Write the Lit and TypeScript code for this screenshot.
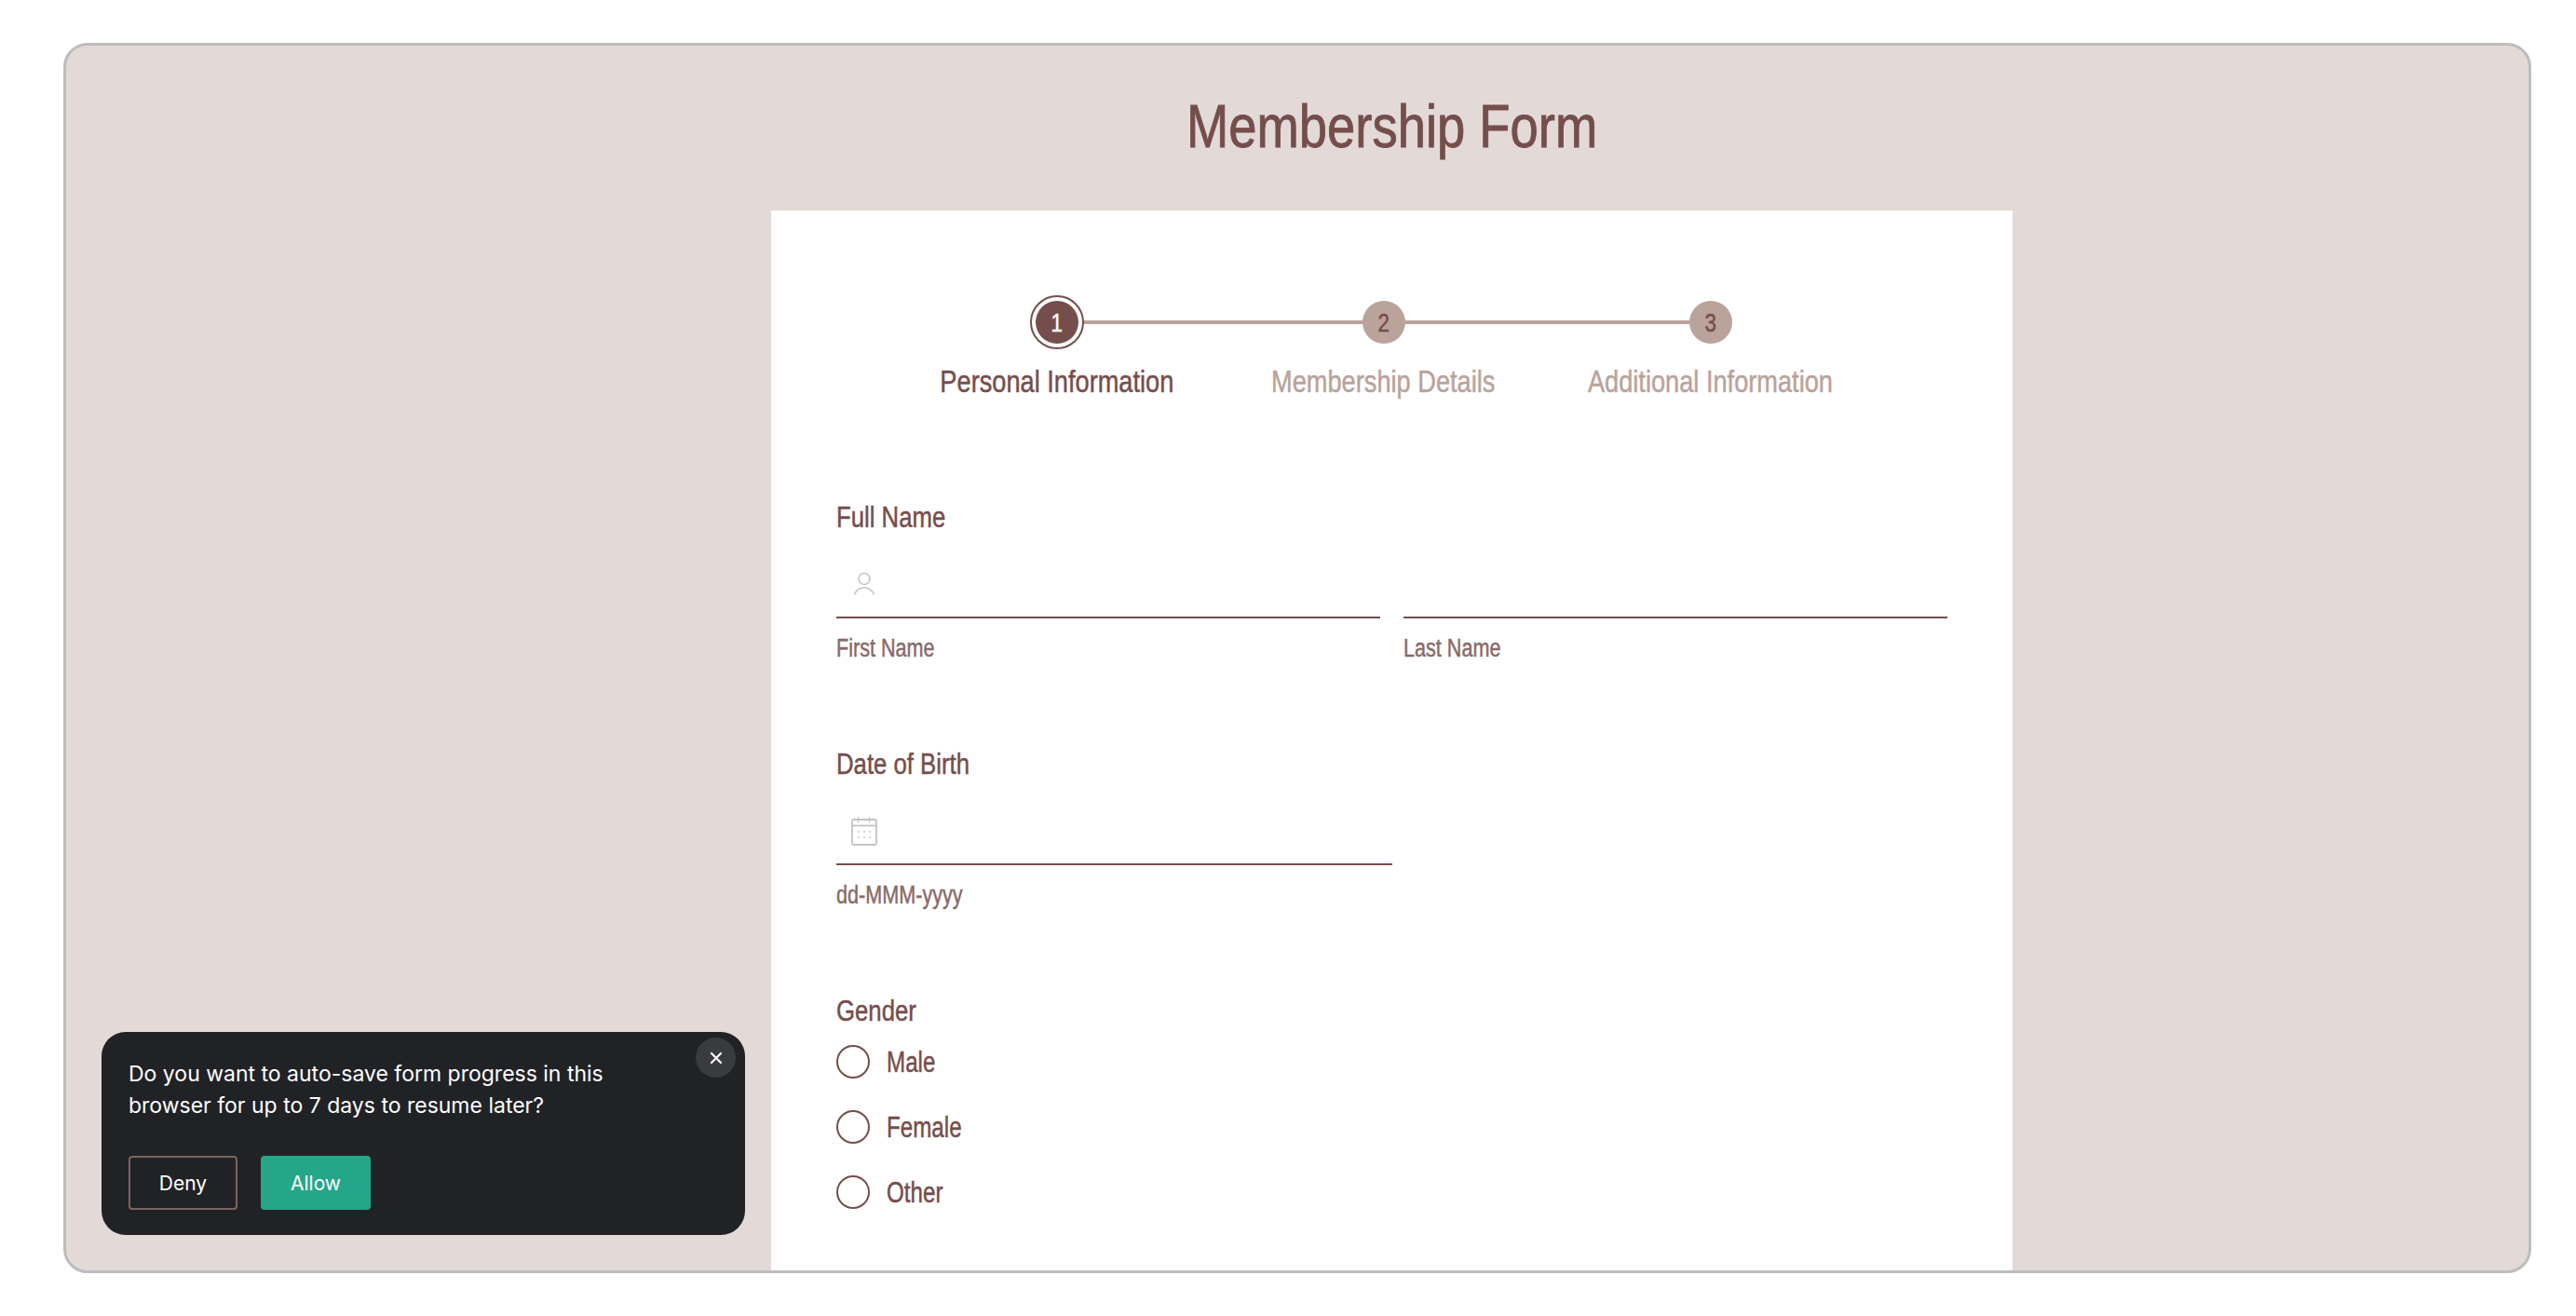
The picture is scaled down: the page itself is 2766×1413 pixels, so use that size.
import { LitElement, html, css } from 'lit';
import { customElement } from 'lit/decorators.js';

const steps = ['Personal Information', 'Membership Details', 'Additional Information'];
const genders = ['Male', 'Female', 'Other'];

const userIcon = html`<svg class="icon" width="30" height="30" viewBox="0 0 30 30" fill="none" stroke="#c6c2c1" stroke-width="1.6">
  <circle cx="15" cy="8.500" r="6" />
  <path d="M4.500 25.500c2-5 5.800-7.500 10.500-7.500s8.500 2.500 10.500 7.500" />
</svg>`;

const calendarIcon = html`<svg class="icon" width="30" height="32" viewBox="0 0 30 32" fill="none" stroke="#c6c2c1" stroke-width="1.8">
  <rect x="2" y="3" width="26" height="27" rx="1.500" />
  <path d="M2 9.500h26" />
  <path d="M8.500 0v6M20.500 0v6" stroke-width="1.200" />
  <path d="M8 16h1.500M14.300 16h1.500M20.500 16h1.500M8 22h1.500M14.300 22h1.500M20.500 22h1.500" stroke-width="1.500" stroke="#b9b4b3" />
</svg>`;

@customElement('app-root')
export class AppRoot extends LitElement {
  static styles = css`
    :host {
      display: block;
      height: 1413px;
      background: #fff;
      font-family: 'Liberation Sans', sans-serif;
      color: #754e4c;
    }
    /* no narrow family installed, so the grotesque gets squeezed */
    .nr {
      display: inline-block;
      transform-origin: left center;
      -webkit-text-stroke: 0.5px currentColor;
      white-space: nowrap;
    }
    .frame {
      position: relative;
      box-sizing: border-box;
      height: 1321px;
      width: 2650px;
      margin-left: 68px;
      top: 46px;
      padding-left: 203px;
      border: 3px solid #bdbdbd;
      border-radius: 26px;
      background: #e3dad8;
      overflow: hidden;
      display: flex;
      flex-direction: column;
      align-items: center;
    }
    h1 {
      margin: 52px 0 55px;
      font-size: 64px;
      line-height: 70px;
      font-weight: 400;
      text-align: center;
    }
    h1 .nr {
      -webkit-text-stroke: 0.9px currentColor;
      transform: scaleX(0.85);
      transform-origin: center;
    }
    .card {
      flex: 1;
      box-sizing: border-box;
      width: 1333px;
      background: #fff;
      padding: 91px 70px 0 70px;
    }
    .stepper {
      display: grid;
      grid-template-columns: repeat(3, 351px);
      justify-content: center;
      margin-bottom: 107px;
      padding-right: 18px;
    }
    .step {
      position: relative;
      display: flex;
      flex-direction: column;
      align-items: center;
      color: #b9a39b;
    }
    .step.active {
      color: #754e4c;
    }
    .step:not(:last-child)::after {
      content: '';
      position: absolute;
      left: 50%;
      width: 100%;
      top: 27px;
      height: 4px;
      background: #b9a39b;
    }
    .ring {
      position: relative;
      z-index: 1;
      box-sizing: border-box;
      width: 58px;
      height: 58px;
      border: 2px solid transparent;
      border-radius: 50%;
      display: flex;
      align-items: center;
      justify-content: center;
      background: #fff;
    }
    .step:not(.active) .ring {
      background: transparent;
    }
    .step.active .ring {
      border-color: #754e4c;
    }
    .num {
      width: 46px;
      height: 46px;
      border-radius: 50%;
      background: #b9a39b;
      color: #754e4c;
      font-size: 28px;
      line-height: 48px;
      text-align: center;
    }
    .num .nr {
      transform: scaleX(0.8);
      transform-origin: center;
    }
    .step.active .num {
      background: #754e4c;
      color: #fff;
    }
    .step-label {
      margin-top: 14px;
      font-size: 34px;
      line-height: 40px;
    }
    .step-label .nr {
      transform: scaleX(0.8);
      transform-origin: center;
    }
    .group {
      margin-bottom: 89px;
    }
    .label {
      padding-top: 2px;
      font-size: 31px;
      line-height: 36px;
    }
    .label .nr {
      transform: scaleX(0.83);
    }
    .row {
      display: flex;
      gap: 25px;
    }
    .col {
      flex: 1;
    }
    .col.date {
      flex: none;
      width: 597px;
    }
    .field {
      box-sizing: border-box;
      height: 90px;
      border-bottom: 2px solid #754e4c;
      display: flex;
      align-items: center;
      padding: 20px 0 0 15px;
    }
    .hint {
      margin-top: 16px;
      font-size: 27px;
      line-height: 32px;
      color: #886b69;
    }
    .hint .nr {
      transform: scaleX(0.8);
    }
    .radios {
      display: flex;
      flex-direction: column;
      gap: 34px;
      margin-top: 18px;
    }
    .radio {
      display: flex;
      align-items: center;
      gap: 18px;
      height: 36px;
      font-size: 31px;
      line-height: 36px;
    }
    .radio .nr {
      margin-top: 2px;
      transform: scaleX(0.78);
    }
    .dot {
      box-sizing: border-box;
      width: 36px;
      height: 36px;
      border: 2px solid #754e4c;
      border-radius: 50%;
    }
    .popup {
      position: absolute;
      left: 38px;
      top: 1059px;
      box-sizing: border-box;
      width: 691px;
      height: 218px;
      padding: 28px 30px 0 29px;
      border-radius: 26px;
      background: #212226;
      color: #fff;
      font-family: Inter, sans-serif;
    }
    .popup p {
      margin: 0;
      font-size: 23px;
      line-height: 34px;
    }
    .actions {
      display: flex;
      gap: 25px;
      margin-top: 37px;
    }
    .btn {
      box-sizing: border-box;
      height: 58px;
      border-radius: 4px;
      display: flex;
      align-items: center;
      justify-content: center;
      font-size: 21px;
    }
    .deny {
      width: 117px;
      border: 2px solid #7b6360;
    }
    .allow {
      width: 118px;
      background: #24a788;
    }
    .close {
      position: absolute;
      top: 6px;
      right: 10px;
      width: 43px;
      height: 43px;
      border-radius: 50%;
      background: #3a3b3e;
      display: flex;
      align-items: center;
      justify-content: center;
    }
  `;

  render() {
    return html`
      <div class="frame">
        <h1><span class="nr">Membership Form</span></h1>
        <div class="card">
          <div class="stepper">
            ${steps.map((s, i) => html`
              <div class="step ${i === 0 ? 'active' : ''}">
                <div class="ring"><div class="num"><span class="nr">${i + 1}</span></div></div>
                <div class="step-label"><span class="nr">${s}</span></div>
              </div>
            `)}
          </div>

          <div class="group">
            <div class="label"><span class="nr">Full Name</span></div>
            <div class="row">
              <div class="col">
                <div class="field">${userIcon}</div>
                <div class="hint"><span class="nr">First Name</span></div>
              </div>
              <div class="col">
                <div class="field"></div>
                <div class="hint"><span class="nr">Last Name</span></div>
              </div>
            </div>
          </div>

          <div class="group">
            <div class="label"><span class="nr">Date of Birth</span></div>
            <div class="col date">
              <div class="field">${calendarIcon}</div>
              <div class="hint"><span class="nr">dd-MMM-yyyy</span></div>
            </div>
          </div>

          <div class="label"><span class="nr">Gender</span></div>
          <div class="radios">
            ${genders.map(g => html`
              <div class="radio"><span class="dot"></span><span class="nr">${g}</span></div>
            `)}
          </div>
        </div>

        <div class="popup">
          <p>Do you want to auto-save form progress in this<br />browser for up to 7 days to resume later?</p>
          <div class="actions">
            <div class="btn deny">Deny</div>
            <div class="btn allow">Allow</div>
          </div>
          <div class="close">
            <svg width="14" height="14" viewBox="0 0 14 14" stroke="#fff" stroke-width="2.200" stroke-linecap="round">
              <path d="M2 2l10 10M12 2L2 12" />
            </svg>
          </div>
        </div>
      </div>
    `;
  }
}
